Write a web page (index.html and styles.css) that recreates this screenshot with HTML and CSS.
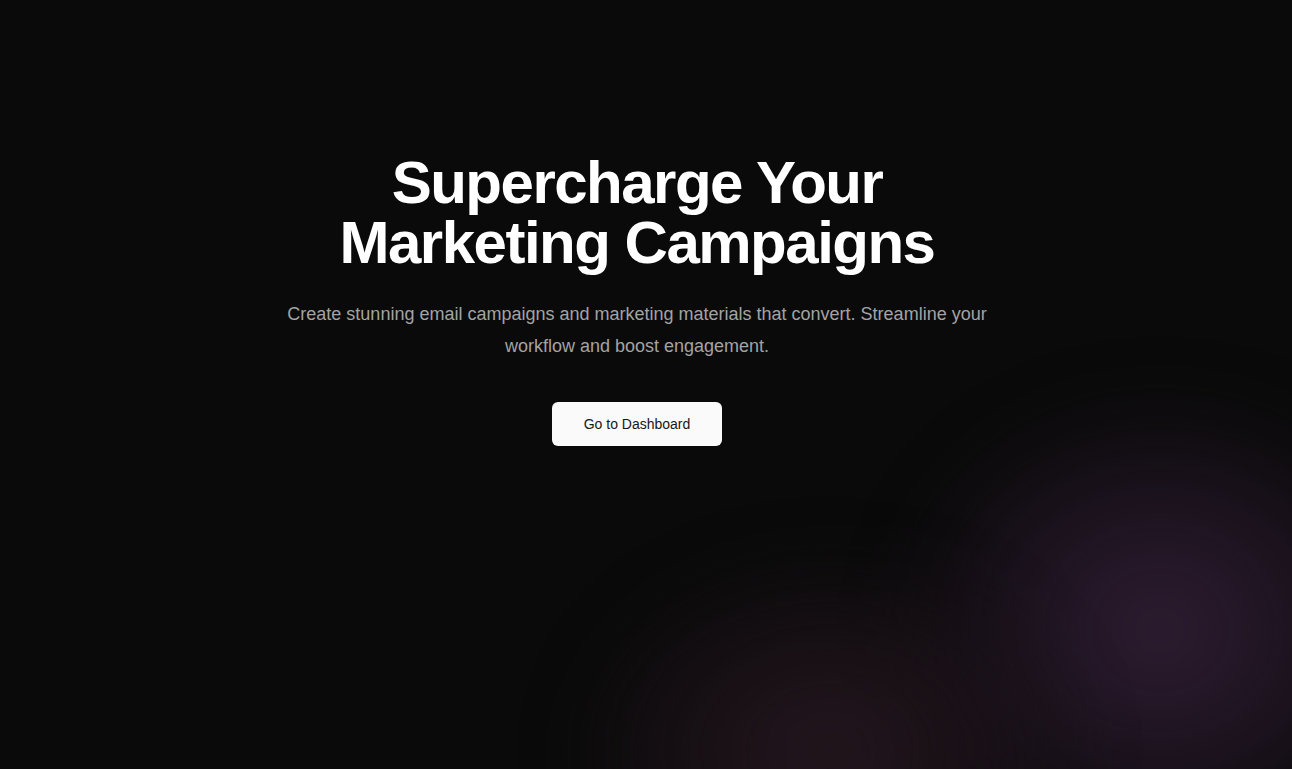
FILE: index.html
```html
<!DOCTYPE html>
<html lang="en">
<head>
<meta charset="utf-8">
<title>Supercharge Your Marketing Campaigns</title>
<link rel="stylesheet" href="styles.css">
</head>
<body>
<main class="hero">
  <div class="glow glow-right"></div>
  <div class="glow glow-left"></div>
  <section class="content">
    <h1 class="title">Supercharge Your<br>Marketing Campaigns</h1>
    <p class="lead">Create stunning email campaigns and marketing materials that convert. Streamline your workflow and boost engagement.</p>
    <a class="btn" href="#">Go to Dashboard</a>
  </section>
</main>
</body>
</html>
```

FILE: styles.css
```css
* { box-sizing: border-box; }
html, body { margin: 0; padding: 0; }
body {
  background: #0a0a0a;
  font-family: "Liberation Sans", Arial, sans-serif;
  color: #fafafa;
  overflow: hidden;
}
.hero {
  position: relative;
  width: 100%;
  height: 769px;
  overflow: hidden;
  background: #0a0a0a;
}
.glow {
  position: absolute;
  border-radius: 50%;
  pointer-events: none;
}
.glow-right {
  left: 900px;
  top: 400px;
  width: 520px;
  height: 460px;
  background: radial-gradient(ellipse at center, rgba(48,30,52,0.95) 0%, rgba(40,25,44,0.7) 35%, rgba(25,16,26,0.3) 65%, rgba(10,10,10,0) 100%);
  filter: blur(30px);
}
.glow-left {
  left: 580px;
  top: 560px;
  width: 500px;
  height: 380px;
  background: radial-gradient(ellipse at center, rgba(40,24,34,0.9) 0%, rgba(32,20,28,0.6) 40%, rgba(20,14,18,0.25) 70%, rgba(10,10,10,0) 100%);
  filter: blur(30px);
}
.content {
  position: relative;
  display: flex;
  flex-direction: column;
  align-items: center;
  text-align: center;
  padding: 153px 18px 0 0;
}
.title {
  margin: 0;
  font-size: 60px;
  line-height: 60px;
  font-weight: 700;
  color: #ffffff;
  letter-spacing: -1.5px;
}
.lead {
  margin: 25px 0 0;
  max-width: 768px;
  font-size: 18px;
  line-height: 32px;
  color: #a3a3a3;
}
.btn {
  margin-top: 40px;
  display: inline-flex;
  align-items: center;
  justify-content: center;
  height: 44px;
  padding: 0 32px;
  border-radius: 6px;
  background: #fafafa;
  color: #171717;
  font-size: 14px;
  text-decoration: none;
}
```
